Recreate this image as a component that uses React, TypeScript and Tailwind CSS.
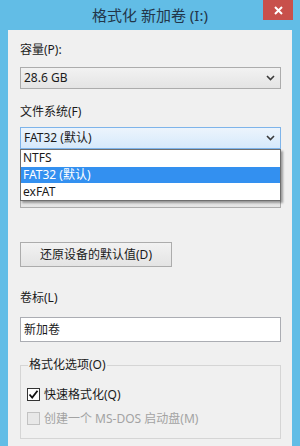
const font = "font-['Noto_Sans','Noto_Sans_CJK_SC',sans-serif]";

function Chevron() {
  return (
    <svg width="9" height="6" viewBox="0 0 9 6">
      <path d="M1 1 L4.5 4.5 L8 1" fill="none" stroke="#3c3c3c" strokeWidth="1.6" />
    </svg>
  );
}

function Select({ value, open = false }: { value: string; open?: boolean }) {
  return (
    <div
      className={`flex h-[22px] items-center justify-between border pl-[3px] pr-[5px] text-[12px] text-[#1a1a1a] ${
        open
          ? 'border-[#7eb4ea] bg-gradient-to-b from-[#ecf4fc] to-[#d6e9fb]'
          : 'border-[#acacac] bg-gradient-to-b from-[#f2f2f2] to-[#e4e4e4]'
      }`}
    >
      <span>{value}</span>
      <Chevron />
    </div>
  );
}

const fsOptions = ['NTFS', 'FAT32 (默认)', 'exFAT'];

export default function App() {
  return (
    <div className={`flex h-[446px] w-[300px] flex-col bg-[#62bde6] ${font}`}>
      {/* TITLE BAR */}
      <div className="relative flex h-[30px] shrink-0 items-center justify-center">
        <span className="text-[15px] text-[#22364a]">格式化 新加卷 (I:)</span>
        <div className="absolute right-[7px] top-0 flex h-[20px] w-[30px] items-center justify-center bg-[#c8504b]">
          <svg width="9" height="9" viewBox="0 0 9 9">
            <path d="M1 1 L8 8 M8 1 L1 8" stroke="#fff" strokeWidth="2" />
          </svg>
        </div>
      </div>

      {/* CONTENT */}
      <div className="mx-[8px] flex flex-1 flex-col bg-[#f0f0f0] pl-[12px] pr-[11px] pt-[12px] text-[12px] leading-[16px] text-[#1a1a1a]">
        <div>容量(P):</div>
        <div className="mt-[9px]">
          <Select value="28.6 GB" />
        </div>

        <div className="mt-[15px]">文件系统(F)</div>
        <div className="relative mt-[7px]">
          <Select value="FAT32 (默认)" open />
          <div className="absolute left-0 top-[22px] z-10 w-full border border-[#6e6e6e] bg-white shadow-[2px_2px_2px_rgba(0,0,0,0.35)]">
            {fsOptions.map((opt, index) => (
              <div
                key={index}
                className={`flex h-[16.7px] items-center pl-[2px] ${
                  index === 1 ? 'bg-[#3390f0] text-white' : 'text-[#1a1a1a]'
                }`}
              >
                {opt}
              </div>
            ))}
          </div>
        </div>

        {/* combobox hidden behind the open list */}
        <div className="mt-[15px] h-[16px]" />
        <div className="mt-[6px]">
          <Select value="" />
        </div>

        <div className="mt-[34px] flex h-[25px] w-[152px] items-center justify-center border border-[#acacac] bg-gradient-to-b from-[#f2f2f2] to-[#e4e4e4]">
          还原设备的默认值(D)
        </div>

        <div className="mt-[23px]">卷标(L)</div>
        <div className="mt-[11px] flex h-[25px] items-center border border-[#abadb3] bg-white pl-[3px]">
          新加卷
        </div>

        {/* FORMAT OPTIONS GROUP */}
        <fieldset className="mt-[15px] border border-[#d5d5d5] px-[6px] pb-[13px]">
          <legend className="ml-[1px] px-[1px] leading-[16px]">格式化选项(O)</legend>
          <div className="mt-[15px] flex h-[13px] items-center gap-[4px]">
            <div className="flex h-[13px] w-[13px] items-center justify-center border border-[#333] bg-white">
              <svg width="11" height="11" viewBox="0 0 11 11">
                <path d="M1.5 5.5 L4.2 8.5 L9.5 1.8" fill="none" stroke="#111" strokeWidth="1.8" />
              </svg>
            </div>
            <span>快速格式化(Q)</span>
          </div>
          <div className="mt-[11px] flex h-[13px] items-center gap-[4px] text-[#a3a3a3]">
            <div className="h-[13px] w-[13px] border border-[#c2c2c2] bg-[#e8e8e8]" />
            <span>创建一个 MS-DOS 启动盘(M)</span>
          </div>
        </fieldset>
      </div>
    </div>
  );
}
